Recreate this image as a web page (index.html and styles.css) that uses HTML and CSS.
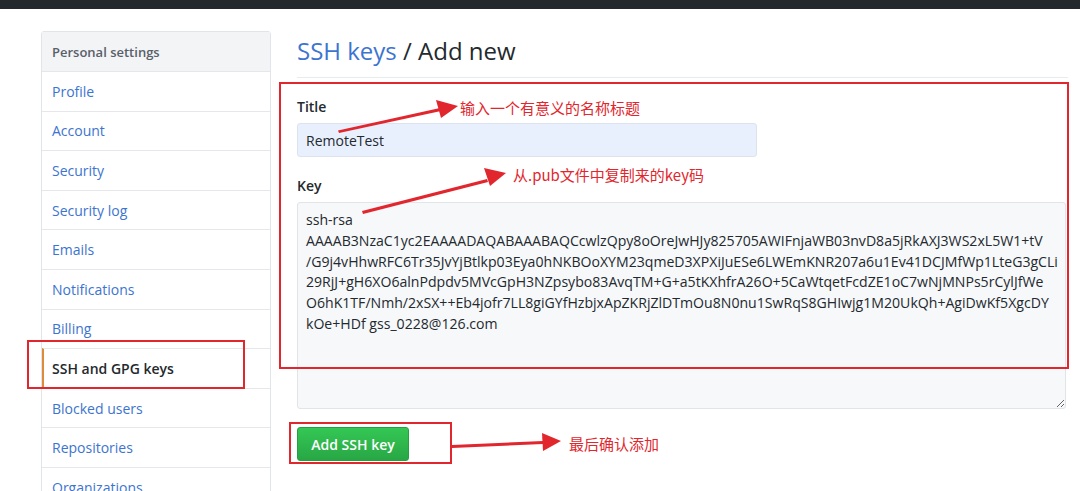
FILE: index.html
```html
<!DOCTYPE html>
<html lang="zh-CN">
<head>
<meta charset="utf-8">
<title>SSH keys / Add new</title>
<link rel="stylesheet" href="styles.css">
</head>
<body>
<div class="topbar"></div>
<div class="page">
  <nav class="menu">
    <div class="menu-heading">Personal settings</div>
    <a class="menu-item">Profile</a>
    <a class="menu-item">Account</a>
    <a class="menu-item">Security</a>
    <a class="menu-item">Security log</a>
    <a class="menu-item">Emails</a>
    <a class="menu-item">Notifications</a>
    <a class="menu-item">Billing</a>
    <a class="menu-item selected">SSH and GPG keys</a>
    <a class="menu-item">Blocked users</a>
    <a class="menu-item">Repositories</a>
    <a class="menu-item">Organizations</a>
  </nav>
  <main class="main">
    <h2 class="subhead"><a class="subhead-link">SSH keys</a> / Add new</h2>
    <form class="form">
      <label class="label">Title</label>
      <input class="input" type="text" value="RemoteTest">
      <label class="label key-label">Key</label>
      <textarea class="textarea" wrap="off">ssh-rsa
AAAAB3NzaC1yc2EAAAADAQABAAABAQCcwlzQpy8oOreJwHJy825705AWIFnjaWB03nvD8a5jRkAXJ3WS2xL5W1+tV
/G9j4vHhwRFC6Tr35JvYjBtlkp03Eya0hNKBOoXYM23qmeD3XPXiJuESe6LWEmKNR207a6u1Ev41DCJMfWp1LteG3gCLi
29RjJ+gH6XO6alnPdpdv5MVcGpH3NZpsybo83AvqTM+G+a5tKXhfrA26O+5CaWtqetFcdZE1oC7wNjMNPs5rCylJfWe
O6hK1TF/Nmh/2xSX++Eb4jofr7LL8giGYfHzbjxApZKRjZlDTmOu8N0nu1SwRqS8GHIwjg1M20UkQh+AgiDwKf5XgcDY
kOe+HDf gss_0228@126.com</textarea>
      <button class="btn" type="button">Add SSH key</button>
    </form>
  </main>
</div>
<svg class="annotations" width="1080" height="491" viewBox="0 0 1080 491">
  <g fill="none" stroke="#e2262e" stroke-width="2">
    <rect x="280" y="83" width="788" height="285"/>
    <rect x="28" y="341" width="216" height="47"/>
    <rect x="290" y="423" width="161" height="40"/>
  </g>
  <g fill="#e2262e">
    <polygon points="338,130.5 440,108 441,111 339,133"/>
    <polygon points="458,106 436,100 441,118"/>
    <polygon points="362,211 487,179 488,182 363,214"/>
    <polygon points="506,173 484,168 490,186"/>
    <polygon points="452,445 543,441 543,444 452,448"/>
    <polygon points="561,441 542,433 543,451"/>
  </g>
  <g class="note" fill="#e2262e">
    <text x="460" y="114">输入一个有意义的名称标题</text>
    <text x="513" y="181">从.pub文件中复制来的key码</text>
    <text x="569" y="450">最后确认添加</text>
  </g>
</svg>
</body>
</html>
```
FILE: styles.css
```css
html, body {
  margin: 0;
  padding: 0;
  background: #fff;
}
body {
  font-family: "Open Sans", "Noto Sans", "Liberation Sans", sans-serif;
  font-size: 14px;
  color: #24292e;
  position: relative;
  width: 1080px;
  height: 491px;
  overflow: hidden;
}
.topbar {
  height: 9px;
  background: #24292e;
}
.page {
  display: flex;
  align-items: flex-start;
  gap: 26px;
  padding: 22px 12px 0 41px;
}
.menu {
  width: 228px;
  flex: none;
  border: 1px solid #e1e4e8;
  border-radius: 3px;
  display: flex;
  flex-direction: column;
}
.menu-heading {
  height: 39px;
  display: flex;
  align-items: center;
  padding-left: 10px;
  background: #f3f4f6;
  color: #586069;
  font-weight: 600;
  font-size: 13px;
}
.menu-item {
  box-sizing: border-box;
  height: 39.6px;
  display: flex;
  align-items: center;
  padding-left: 10px;
  border-top: 1px solid #e5e7ea;
  color: #3c74d0;
  font-size: 14px;
}
.menu-item.selected {
  color: #24292e;
  font-weight: 600;
  border-left: 2px solid #e08a3c;
  padding-left: 8px;
}
.main {
  flex: 1;
  min-width: 0;
}
.subhead {
  margin: 2px 0 0;
  padding-bottom: 8px;
  border-bottom: 1px solid #e9ecef;
  font-size: 24px;
  line-height: 36px;
  font-weight: 400;
  color: #24292e;
}
.subhead-link {
  color: #3c74d0;
}
.form {
  display: flex;
  flex-direction: column;
  align-items: flex-start;
  padding-top: 18px;
}
.label {
  font-weight: 600;
  font-size: 14px;
  line-height: 21px;
  margin-bottom: 6px;
}
.key-label {
  margin-top: 18px;
}
.input {
  box-sizing: border-box;
  width: 460px;
  height: 34px;
  padding: 0 8px;
  border: 1px solid #dde3ec;
  border-radius: 3px;
  background: #e8f0fe;
  font-family: inherit;
  font-size: 14px;
  color: #24292e;
  outline: none;
}
.textarea {
  box-sizing: border-box;
  width: 769px;
  height: 207px;
  padding: 7px 8px;
  border: 1px solid #e1e4e8;
  border-radius: 3px;
  background: #f6f8fa;
  font-family: inherit;
  font-size: 14.1px;
  line-height: 20.8px;
  color: #24292e;
  resize: vertical;
  overflow: hidden;
  outline: none;
}
.btn {
  margin-top: 18px;
  height: 34px;
  width: 112px;
  border: 1px solid #24a043;
  border-radius: 3px;
  background: linear-gradient(#34c755, #28a745);
  color: #fff;
  font-family: inherit;
  font-weight: 600;
  font-size: 14px;
  padding: 0;
}
.annotations {
  position: absolute;
  left: 0;
  top: 0;
  pointer-events: none;
}
.note {
  font-family: "Noto Sans CJK SC", "Noto Sans", sans-serif;
  font-size: 15px;
}
```
